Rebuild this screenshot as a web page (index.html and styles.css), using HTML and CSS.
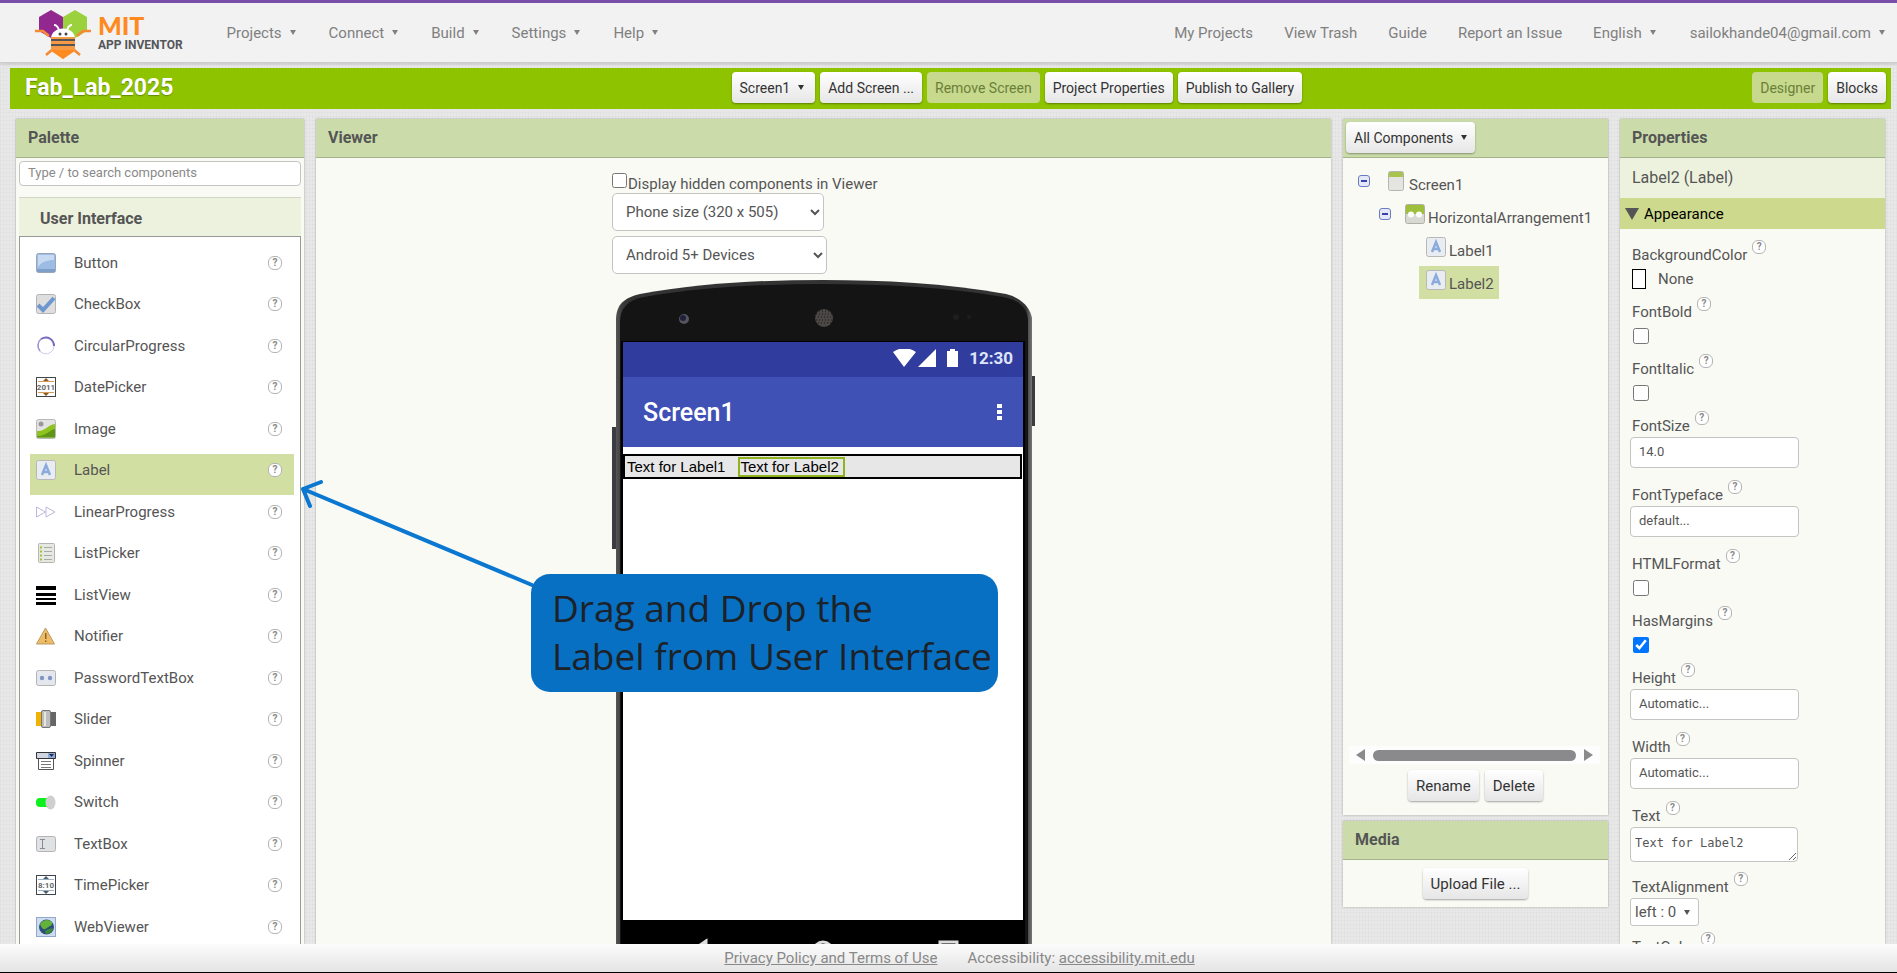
FILE: index.html
```html
<!DOCTYPE html>
<html lang="en">
<head>
<meta charset="utf-8">
<title>MIT App Inventor</title>
<link rel="stylesheet" href="styles.css">
</head>
<body>
<header class="top">
  <a class="logo" href="#" aria-label="MIT App Inventor">
    <svg class="bee" viewBox="0 0 56 48" aria-hidden="true">
      <path fill="#92278f" d="M4 8 16 1l12 7v14l-12 7-12-7z"/>
      <path fill="#9bd13c" d="M28 8 40 1l12 7v14l-12 7-12-7z"/>
      <path fill="none" stroke="#f58a33" stroke-width="2.500" d="M0 22h8l6 5M56 22h-8l-6 5M11 46l7-6M45 46l-7-6"/>
      <path fill="none" stroke="#fff" stroke-width="2" d="M19 16c3 0 4 2 5 5M37 16c-3 0-4 2-5 5"/>
      <path fill="#fff" d="M16 30c0-14 24-14 24 0z"/>
      <path fill="#f79a45" d="M16 28h24v14l-12 8-12-8z"/>
      <path fill="#ff8a1f" d="M16 41h24l-12 9z"/>
      <path fill="#555" d="M16 30h24v2H16zM16 35h24v2H16z"/>
      <circle cx="25" cy="25" r="1.500" fill="#444"/><circle cx="31" cy="25" r="1.500" fill="#444"/>
    </svg>
    <span class="logo-text"><span class="mit">MIT</span><span class="app">APP INVENTOR</span></span>
  </a>
  <nav class="menu">
    <button class="drop">Projects</button>
    <button class="drop">Connect</button>
    <button class="drop">Build</button>
    <button class="drop">Settings</button>
    <button class="drop">Help</button>
  </nav>
  <nav class="links">
    <a href="#">My Projects</a>
    <a href="#">View Trash</a>
    <a href="#">Guide</a>
    <a href="#">Report an Issue</a>
    <button class="drop language">English</button>
    <button class="drop">sailokhande04@gmail.com</button>
  </nav>
</header>

<div class="bar">
  <h1>Fab_Lab_2025</h1>
  <div class="bar-buttons">
    <button class="btn drop">Screen1</button>
    <button class="btn">Add Screen ...</button>
    <button class="btn" disabled>Remove Screen</button>
    <button class="btn">Project Properties</button>
    <button class="btn">Publish to Gallery</button>
  </div>
  <div class="bar-buttons">
    <button class="btn" disabled>Designer</button>
    <button class="btn">Blocks</button>
  </div>
</div>

<main class="work">
  <section class="panel palette">
    <h2>Palette</h2>
    <input class="search" type="text" placeholder="Type / to search components" aria-label="Search components">
    <h3>User Interface</h3>
    <ul class="items">
      <li><svg viewBox="0 0 20 20"><rect x=".5" y=".5" width="19" height="19" rx="2" fill="#9dbce4" stroke="#9aa5b5"/><path fill="#c6daf2" d="M2 2h16v5C10 7 6 9 2 14z"/><path fill="#7f9fcb" d="M1 16h18v3H1z"/></svg>Button<a class="help" href="#">?</a></li>
      <li><svg viewBox="0 0 20 20"><rect x=".5" y=".5" width="19" height="19" rx="2" fill="#dedede" stroke="#b4b4b4"/><path fill="none" stroke="#6f97cf" stroke-width="4" d="m2 11 5 5L18 4"/></svg>CheckBox<a class="help" href="#">?</a></li>
      <li><svg viewBox="0 0 20 20" fill="none"><path stroke="#cfcdf0" stroke-width="1" d="M18 10A8 8 0 1 1 3 6"/><path stroke="#9a90d6" stroke-width="1.500" d="M4 15A8.500 8.500 0 0 1 5 3"/><path stroke="#7a68bd" stroke-width="2" d="M5 3c7-4 13 1 13 7"/></svg>CircularProgress<a class="help" href="#">?</a></li>
      <li><svg viewBox="0 0 20 20"><rect x=".5" y=".5" width="19" height="19" fill="#fff" stroke="#444"/><path stroke="#d79a55" d="M2 4.500h16M2 15.500h16"/><path fill="#8a5a2a" d="m10 1 3 3H7zM10 19l3-3H7z"/><text x="10" y="13" font-size="8" font-weight="700" text-anchor="middle" fill="#666">2011</text></svg>DatePicker<a class="help" href="#">?</a></li>
      <li><svg viewBox="0 0 20 20"><rect x=".5" y=".5" width="19" height="19" rx="2" fill="#e3e3e3" stroke="#b8b8b8"/><circle cx="5" cy="5" r="2.500" fill="#999"/><path fill="#8fc31e" d="M1 12c8 1 10-6 18-7v13.500H1z"/><path fill="#5f9616" d="M1 17c8 1 12-6 18-7v8.500H1z"/></svg>Image<a class="help" href="#">?</a></li>
      <li class="selected"><svg viewBox="0 0 20 20"><rect x=".5" y=".5" width="19" height="19" rx="2" fill="#e9edf2" stroke="#b8b8b8"/><path fill="none" stroke="#8aabdc" stroke-width="2.500" d="m6 15 4-10 4 10M7 12h6"/></svg>Label<a class="help" href="#">?</a></li>
      <li><svg viewBox="0 0 20 20"><path fill="none" stroke="#bdb8dc" d="m.5 5 9 5-9 5zM10 5l9 5-9 5z"/></svg>LinearProgress<a class="help" href="#">?</a></li>
      <li><svg viewBox="0 0 20 20"><rect x="2.500" y=".5" width="16" height="19" rx="1" fill="#e6e8e2" stroke="#b5b5b0"/><path stroke="#a9a9a9" d="M8 4.500h8M8 8.500h8M8 12.500h8M8 16.500h8"/><path stroke="#9fc23b" stroke-width="2" d="M4 4.500h2M4 8.500h2M4 12.500h2M4 16.500h2"/></svg>ListPicker<a class="help" href="#">?</a></li>
      <li><svg viewBox="0 0 20 20"><path d="M0 1h20v4H0zM0 8h20v3H0zM0 13h20v2H0zM0 17h20v3H0z"/></svg>ListView<a class="help" href="#">?</a></li>
      <li><svg viewBox="0 0 20 20"><path fill="#eebc66" stroke="#b99a66" stroke-linejoin="round" d="m9.500 2 9 16H.5z"/><path fill="#8c6420" d="M9 7h1.500v6H9zM9 14.500h1.500V16H9z"/></svg>Notifier<a class="help" href="#">?</a></li>
      <li><svg viewBox="0 0 20 20"><rect x=".5" y="2.500" width="19" height="15" rx="2" fill="#e4e7ee" stroke="#b4b4b4"/><circle cx="6" cy="10" r="2.200" fill="#8094c6"/><circle cx="14" cy="10" r="2.200" fill="#8094c6"/></svg>PasswordTextBox<a class="help" href="#">?</a></li>
      <li><svg viewBox="0 0 20 20"><path fill="#f0b400" d="M0 3h6v14H0z"/><path fill="#666" d="M14 3h6v14h-6z"/><rect x="5.500" y="1.500" width="9" height="17" rx="1.500" fill="#bdbdbd" stroke="#777"/><path stroke="#e6e6e6" stroke-width="2" d="M9 3v14"/></svg>Slider<a class="help" href="#">?</a></li>
      <li><svg viewBox="0 0 20 20"><path fill="#fff" stroke="#555" d="M2.500 7.500h15v11h-15z"/><path fill="#cfd6e2" stroke="#333" d="M.5 1.500h19v6H.5z"/><path fill="#8fa9d6" d="M12 2h7v5h-7z"/><path fill="#1c2d5a" d="M13 3h5l-2.500 3z"/><path stroke="#777" d="M5 10.500h10M5 13.500h10M5 16.500h10"/></svg>Spinner<a class="help" href="#">?</a></li>
      <li><svg viewBox="0 0 20 20"><rect y="6" width="16" height="9" rx="4" fill="#0cf01c"/><ellipse cx="14.500" cy="10.500" rx="5" ry="7" fill="#cfcfcf"/></svg>Switch<a class="help" href="#">?</a></li>
      <li><svg viewBox="0 0 20 20"><rect x=".5" y="2.500" width="19" height="15" rx="2" fill="#dfe1e4" stroke="#b4b4b4"/><path fill="none" stroke="#868b94" d="M4 5.500h5M4 14.500h5M6.500 5v10"/></svg>TextBox<a class="help" href="#">?</a></li>
      <li><svg viewBox="0 0 20 20"><rect x=".5" y=".5" width="19" height="19" fill="#fff" stroke="#3d4650"/><path stroke="#9ab0c4" d="M2 4.500h16M2 15.500h16"/><path fill="#4c5a66" d="m10 1 3 3H7zM10 19l3-3H7z"/><text x="10" y="13" font-size="8" font-weight="700" text-anchor="middle" fill="#666">8:10</text></svg>TimePicker<a class="help" href="#">?</a></li>
      <li><svg viewBox="0 0 20 20"><rect x=".5" y=".5" width="19" height="19" fill="#cfdcf0" stroke="#8fa9d0"/><circle cx="10.500" cy="10" r="7.500" fill="#2c4f78"/><path fill="#63b23c" d="M4 7c3-5 9-5 12-2 1 4-3 4-5 6s-5 2-7-4z"/><path fill="#3c8a35" d="M9 14c3-2 6-3 8-2-1 3-4 5-7 5z"/></svg>WebViewer<a class="help" href="#">?</a></li>
    </ul>
  </section>

  <section class="panel viewer">
    <h2>Viewer</h2>
    <div class="stage">
      <label class="hidden-toggle"><input type="checkbox">Display hidden components in Viewer</label>
      <select class="size" aria-label="Screen size"><option>Phone size (320 x 505)</option></select>
      <select class="device" aria-label="Device"><option>Android 5+ Devices</option></select>
      <div class="phone">
        <svg class="shell" viewBox="0 0 424 760" aria-hidden="true">
          <defs>
            <linearGradient id="edge"><stop offset="0" stop-color="#555"/><stop offset=".015" stop-color="#3a3a3a"/><stop offset=".03" stop-color="#333"/><stop offset=".97" stop-color="#333"/><stop offset=".985" stop-color="#333"/><stop offset="1" stop-color="#777"/></linearGradient>
          </defs>
          <path fill="#3a3c42" d="M0 147h5v122H0zM417 96h6v50h-6z"/>
          <path fill="url(#edge)" d="M4 760V38C5 24 12 18 28 14 90 3 150 0 211 0s122 3 183 14c16 4 24 14 26 24v722z"/>
          <path fill="#141414" d="M8 760V42c0-14 8-22 24-25C90 7 150 4 211 4s122 3 180 13c16 3 25 11 25 25v718z"/>
          <circle cx="72" cy="39" r="5" fill="#55555f"/><circle cx="71" cy="38" r="3" fill="#20203a"/>
          <circle cx="212" cy="38" r="9" fill="#4a4745"/>
          <path stroke="#1c1c1c" stroke-dasharray="1 2" d="M204 34h17M203 37h18M204 40h17M206 43h13M207 31h11"/>
          <circle cx="344" cy="37" r="3" fill="#1e1e20"/><circle cx="357" cy="37" r="2" fill="#1e1e20"/>
          <path fill="#000" d="M9 61h404v699H9z"/>
          <path fill="none" stroke="#ddd" stroke-width="3" d="m94 661-16 11 16 11zM345 662h-17v18h17z"/>
          <circle cx="211" cy="671" r="9" fill="none" stroke="#ddd" stroke-width="3"/>
        </svg>
        <div class="screen">
          <div class="status">
            <svg viewBox="0 0 66 18" aria-hidden="true"><path fill="#fff" d="M0 3c7-5 16-5 23 0L11 18zM25 18 43 0v18zM54 2h3V0h5v2h3v16H54z"/></svg>
            <span>12:30</span>
          </div>
          <div class="title"><span>Screen1</span><svg viewBox="0 0 6 16" aria-hidden="true"><path fill="#fff" d="M0 0h5v4H0zM0 6h5v4H0zM0 12h5v4H0z"/></svg></div>
          <div class="arrangement"><span>Text for Label1</span><span class="picked">Text for Label2</span></div>
        </div>
      </div>
    </div>
  </section>

  <div class="side">
    <section class="panel components">
      <div class="head"><button class="btn drop">All Components</button></div>
      <ul class="tree">
        <li><button class="fold" aria-label="Collapse"></button><svg viewBox="0 0 20 20"><rect x="2.500" y=".5" width="15" height="19" rx="2" fill="#e4e4e0" stroke="#b5b5b0"/><path fill="#a9c34f" d="M3 1h14v5H3z"/></svg>Screen1</li>
        <li class="l1"><button class="fold" aria-label="Collapse"></button><svg viewBox="0 0 20 20"><rect x=".5" y=".5" width="19" height="19" rx="2" fill="#d9d9d4" stroke="#b0b0a8"/><path fill="#9dbf3c" d="M1 1h18v9H1z"/><circle cx="6" cy="10.500" r="3" fill="#fff"/><circle cx="14" cy="10.500" r="3" fill="#fff"/></svg>HorizontalArrangement1</li>
        <li class="l2"><svg viewBox="0 0 20 20"><rect x=".5" y=".5" width="19" height="19" rx="2" fill="#e9edf2" stroke="#b8b8b8"/><path fill="none" stroke="#8aabdc" stroke-width="2.500" d="m6 15 4-10 4 10M7 12h6"/></svg>Label1</li>
        <li class="l2 selected"><svg viewBox="0 0 20 20"><rect x=".5" y=".5" width="19" height="19" rx="2" fill="#e9edf2" stroke="#b8b8b8"/><path fill="none" stroke="#8aabdc" stroke-width="2.500" d="m6 15 4-10 4 10M7 12h6"/></svg>Label2</li>
      </ul>
      <div class="scroll"><i class="left"></i><i class="thumb"></i><i class="right"></i></div>
      <div class="actions"><button class="btn">Rename</button><button class="btn">Delete</button></div>
    </section>
    <section class="panel media">
      <h2>Media</h2>
      <div class="actions"><button class="btn">Upload File ...</button></div>
    </section>
  </div>

  <section class="panel properties">
    <h2>Properties</h2>
    <div class="target">Label2 (Label)</div>
    <button class="group">Appearance</button>
    <div class="props">
      <div class="prop"><span class="name">BackgroundColor<a class="help" href="#">?</a></span><button class="color"><i></i>None</button></div>
      <div class="prop"><span class="name"><label for="p1">FontBold</label><a class="help" href="#">?</a></span><input id="p1" type="checkbox"></div>
      <div class="prop"><span class="name"><label for="p2">FontItalic</label><a class="help" href="#">?</a></span><input id="p2" type="checkbox"></div>
      <div class="prop"><span class="name"><label for="p3">FontSize</label><a class="help" href="#">?</a></span><input id="p3" type="text" value="14.0"></div>
      <div class="prop"><span class="name"><label for="p4">FontTypeface</label><a class="help" href="#">?</a></span><input id="p4" type="text" value="default..."></div>
      <div class="prop"><span class="name"><label for="p5">HTMLFormat</label><a class="help" href="#">?</a></span><input id="p5" type="checkbox"></div>
      <div class="prop"><span class="name"><label for="p6">HasMargins</label><a class="help" href="#">?</a></span><input id="p6" type="checkbox" checked></div>
      <div class="prop"><span class="name"><label for="p7">Height</label><a class="help" href="#">?</a></span><input id="p7" type="text" value="Automatic..."></div>
      <div class="prop"><span class="name"><label for="p8">Width</label><a class="help" href="#">?</a></span><input id="p8" type="text" value="Automatic..."></div>
      <div class="prop"><span class="name"><label for="p9">Text</label><a class="help" href="#">?</a></span><textarea id="p9">Text for Label2</textarea></div>
      <div class="prop"><span class="name">TextAlignment<a class="help" href="#">?</a></span><button class="align drop">left : 0</button></div>
      <div class="prop"><span class="name">TextColor<a class="help" href="#">?</a></span></div>
    </div>
  </section>
</main>

<footer>
  <a href="#">Privacy Policy and Terms of Use</a>
  <span>Accessibility: <a href="#">accessibility.mit.edu</a></span>
</footer>

<svg class="arrow" viewBox="0 0 240 112" aria-hidden="true"><path fill="none" stroke="#0a78d1" stroke-width="4" stroke-linecap="round" stroke-linejoin="round" d="M234 107 5 11M23 4 5 11l7 17"/></svg>
<div class="callout">Drag and Drop the<br>Label from User Interface</div>
</body>
</html>
```
FILE: styles.css
```css
* { box-sizing: border-box; }
body {
  margin: 0;
  height: 100vh;
  display: flex;
  flex-direction: column;
  overflow: hidden;
  border-bottom: 1px solid #000;
  font-family: Roboto, "Liberation Sans", sans-serif;
  font-size: 15px;
  color: #555;
  background-color: #e8e8e8;
  background-image:
    repeating-linear-gradient(90deg, rgba(0,0,0,.018) 0 1px, transparent 1px 3px),
    repeating-linear-gradient(0deg, rgba(0,0,0,.018) 0 1px, transparent 1px 4px);
}
button, input, select, textarea { font: inherit; color: inherit; margin: 0; }
button { border: 0; background: none; padding: 0; white-space: nowrap; }
h1, h2, h3, ul { margin: 0; padding: 0; }
ul { list-style: none; }
a { color: inherit; }
.drop { display: inline-flex; align-items: center; gap: 8px; }
.drop::after {
  content: "";
  border: 3px solid transparent;
  border-top: 5px solid currentColor;
  border-bottom: 0;
}

.top {
  flex: none;
  height: 63px;
  display: flex;
  align-items: center;
  padding: 0 12px 0 35px;
  border-top: 3px solid #7a4fa8;
  background: #f2f2f2;
  border-bottom: 1px solid #ccc;
  box-shadow: 0 1px 3px rgba(0,0,0,.15);
  color: #808080;
}
.logo { display: flex; align-items: center; gap: 7px; text-decoration: none; margin-right: 44px; }
.bee { width: 56px; height: 48px; overflow: visible; }
.logo-text { display: flex; flex-direction: column; font-family: Lato, sans-serif; }
.mit { font-size: 25px; line-height: 25px; font-weight: 900; color: #ff8a1f; }
.app { font-family: Roboto, sans-serif; font-size: 12px; line-height: 15px; font-weight: 700; color: #54565a; white-space: nowrap; }
.menu { display: flex; gap: 33px; }
.links { display: flex; gap: 31px; margin-left: auto; }
.links a { text-decoration: none; }
.language { margin-right: 3px; }

.bar {
  flex: none;
  display: grid;
  grid-template-columns: 5fr 7fr 1fr;
  align-items: center;
  height: 41px;
  margin: 5px 6px 0 10px;
  padding: 0 5px 2px 0;
  background: #8ec300;
  font-size: 14px;
}
.bar h1 { padding-left: 15px; font-size: 23px; font-weight: 700; color: #fff; text-shadow: 0 1px 1px rgba(0,0,0,.3); }
.bar-buttons { display: flex; gap: 5px; }
.bar-buttons:last-child { justify-content: flex-end; }
.btn {
  height: 31px;
  padding: 0 8px;
  border-radius: 4px;
  color: #333;
  background: linear-gradient(#fff, #e6e6e6);
  box-shadow: 0 1px 2px rgba(0,0,0,.35);
}
.bar .drop { padding-right: 11px; }
.btn:disabled { background: #c6d98c; color: #6c7f3a; box-shadow: none; }

.work {
  flex: 1;
  min-height: 0;
  display: grid;
  grid-template-columns: 288px 1fr 265px 265px;
  gap: 12px;
  padding: 10px 12px 0 16px;
}
.panel { background: #f9faf4; box-shadow: 0 0 2px rgba(0,0,0,.3); overflow: hidden; min-width: 0; }
.panel h2, .head {
  height: 39px;
  line-height: 38px;
  padding-left: 12px;
  font-size: 16px;
  font-weight: 700;
  background: #cbdcaa;
  border-bottom: 1px solid #a5b38a;
}

.palette { display: flex; flex-direction: column; }
.palette h2 { flex: none; }
.search {
  flex: none;
  height: 25px;
  margin: 3px 3px 11px;
  padding: 0 8px 2px;
  border: 1px solid #c4c4c4;
  border-radius: 4px;
  font-size: 13px;
  background: #fff;
}
.search::placeholder { color: #8a8a8a; opacity: 1; }
.palette h3 {
  flex: none;
  height: 39px;
  line-height: 41px;
  margin: 0 3px;
  padding-left: 21px;
  font-size: 16px;
  background: #edf2df;
  border-top: 1px solid #d2d6c6;
}
.items {
  flex: 1;
  min-height: 0;
  overflow: hidden;
  margin: 0 3px;
  padding: 10px 6px 0 10px;
  border: 1px solid #999;
  border-bottom: 0;
  background: #fff;
}
.items li { display: flex; align-items: center; height: 41px; padding: 0 12px 10px 6px; }
.items li:nth-child(even) { margin-bottom: 1px; }
.items svg { width: 20px; height: 20px; margin-right: 18px; }
.items .help { margin-left: auto; }
.selected { background: #d2dfa2; }
.help {
  width: 14px;
  height: 14px;
  border: 1px solid #b4b4b4;
  border-radius: 6px;
  background: #fff;
  color: #888;
  font-size: 10px;
  line-height: 12px;
  font-weight: 700;
  text-align: center;
  text-decoration: none;
}

.stage { width: 423px; margin: 0 auto; padding-top: 15px; display: flex; flex-direction: column; align-items: flex-start; }
.hidden-toggle { display: flex; height: 20px; align-items: flex-end; white-space: nowrap; }
.hidden-toggle input { width: 15px; height: 15px; margin: 0 1px 5px 0; }
.stage select { padding: 0 0 0 9px; height: 38px; border: 1px solid #c4c4c4; border-radius: 5px; background-color: #fff; color: #555; }
.size { width: 212px; }
.device { width: 215px; margin-top: 5px; }
.phone { display: grid; width: 424px; margin-top: 6px; }
.shell, .screen { grid-area: 1 / 1; }
.shell { width: 100%; }
.screen { margin: 62px 13px 0 11px; height: 578px; background: #fff; color: #000; }
.status { display: flex; align-items: center; justify-content: flex-end; gap: 10px; height: 35px; padding: 0 10px 3px 0; background: #303d9f; color: #dfe4fa; font-size: 17px; font-weight: 700; }
.status svg { width: 66px; height: 18px; }
.title { display: flex; align-items: center; justify-content: space-between; height: 70px; padding: 0 20px; background: #4051b5; color: #fff; font-size: 25px; font-weight: 500; }
.title svg { width: 6px; height: 16px; }
.arrangement {
  display: flex;
  align-items: center;
  gap: 13px;
  height: 25px;
  margin: 7px 1px 0 0;
  border: 2px solid #000;
  background: #e7e7e7;
  font-family: "Liberation Sans", sans-serif;
  padding-left: 2px;
}
.picked { border: 2px solid #8fb31d; padding-right: 4px; line-height: 16px; }

.side { display: flex; flex-direction: column; gap: 6px; min-width: 0; }
.components { height: 696px; display: flex; flex-direction: column; }
.head { flex: none; padding: 3px; line-height: normal; }
.head .btn { font-size: 14px; font-weight: 400; }
.tree { padding: 9px 0 0 10px; flex: 1; }
.tree li { display: flex; align-items: center; height: 33px; width: max-content; padding: 4px 5px 0; white-space: nowrap; line-height: 33px; }
.tree svg { width: 20px; height: 20px; margin: 0 3px 10px 0; }
.tree .l1 { margin-left: 21px; }
.tree .l2 { margin-left: 66px; padding-left: 7px; }
.fold { width: 12px; height: 12px; margin: 0 16px 10px 0; border: 1px solid #6a7cc4; border-radius: 3px; background: linear-gradient(#3a44a8, #3a44a8) center / 6px 2px no-repeat #e4e8f8; }
.tree .l1 .fold { margin-right: 14px; }
.scroll { display: flex; align-items: center; gap: 8px; height: 18px; margin: 0 8px 6px 6px; padding: 0 7px; background: #fdfdfd; }
.scroll i { border: 6px solid transparent; }
.scroll .left { border-right: 9px solid #8a8a8c; border-left: 0; }
.scroll .right { border-left: 9px solid #8a8a8c; border-right: 0; }
.scroll .thumb { flex: 1; height: 11px; border: 0; border-radius: 6px; background: #8a8a8c; }
.actions { display: flex; justify-content: center; gap: 6px; padding-bottom: 14px; }
.media .actions { padding: 8px 0; }

.target { height: 40px; line-height: 40px; padding-left: 12px; font-size: 16px; background: #edf2df; }
.group { display: flex; align-items: center; gap: 5px; width: 100%; height: 31px; padding-left: 5px; background: #cdda8e; color: #000; }
.group::before { content: ""; border: 7px solid transparent; border-top: 12px solid #555; border-bottom: 0; }
.props { padding: 11px 0 0 10px; }
.prop { display: flex; flex-direction: column; align-items: flex-start; }
.name { display: flex; align-items: flex-start; gap: 5px; height: 26px; padding-left: 2px; line-height: 31px; }
.prop input[type=checkbox] { width: 16px; height: 16px; margin: 5px 0 10px 3px; }
.prop input[type=text] { width: 169px; height: 31px; margin-bottom: 12px; padding: 0 8px 2px; border: 1px solid #c4c4c4; border-radius: 4px; background: #fff; font-size: 13px; }
.prop textarea { width: 168px; height: 35px; margin-bottom: 10px; padding: 7px 4px; border: 1px solid #c4c4c4; border-radius: 4px; background: #fff; font: 12px/16px "DejaVu Sans Mono", monospace; overflow: hidden; }
.color { display: flex; align-items: center; gap: 12px; height: 20px; margin: 3px 0 8px 2px; }
.color i { width: 14px; height: 20px; border: 1px solid #000; background: #fff; }
.align { height: 28px; margin-bottom: 6px; padding: 0 8px 0 4px; border: 1px solid #c4c4c4; border-radius: 3px; background: #fff; }

footer {
  flex: none;
  height: 28px;
  display: flex;
  align-items: center;
  justify-content: center;
  gap: 30px;
  padding-left: 22px;
  color: #888;
  background: linear-gradient(#fcfcfc, #e4e4e4);
}

.arrow { position: absolute; left: 298px; top: 478px; width: 240px; height: 112px; }
.callout {
  position: absolute;
  left: 531px;
  top: 574px;
  width: 467px;
  height: 118px;
  padding: 10px 21px;
  border-radius: 19px;
  background: #0870c3;
  color: #1c2227;
  font: 37px/48px "Open Sans", sans-serif;
  white-space: nowrap;
}
```
